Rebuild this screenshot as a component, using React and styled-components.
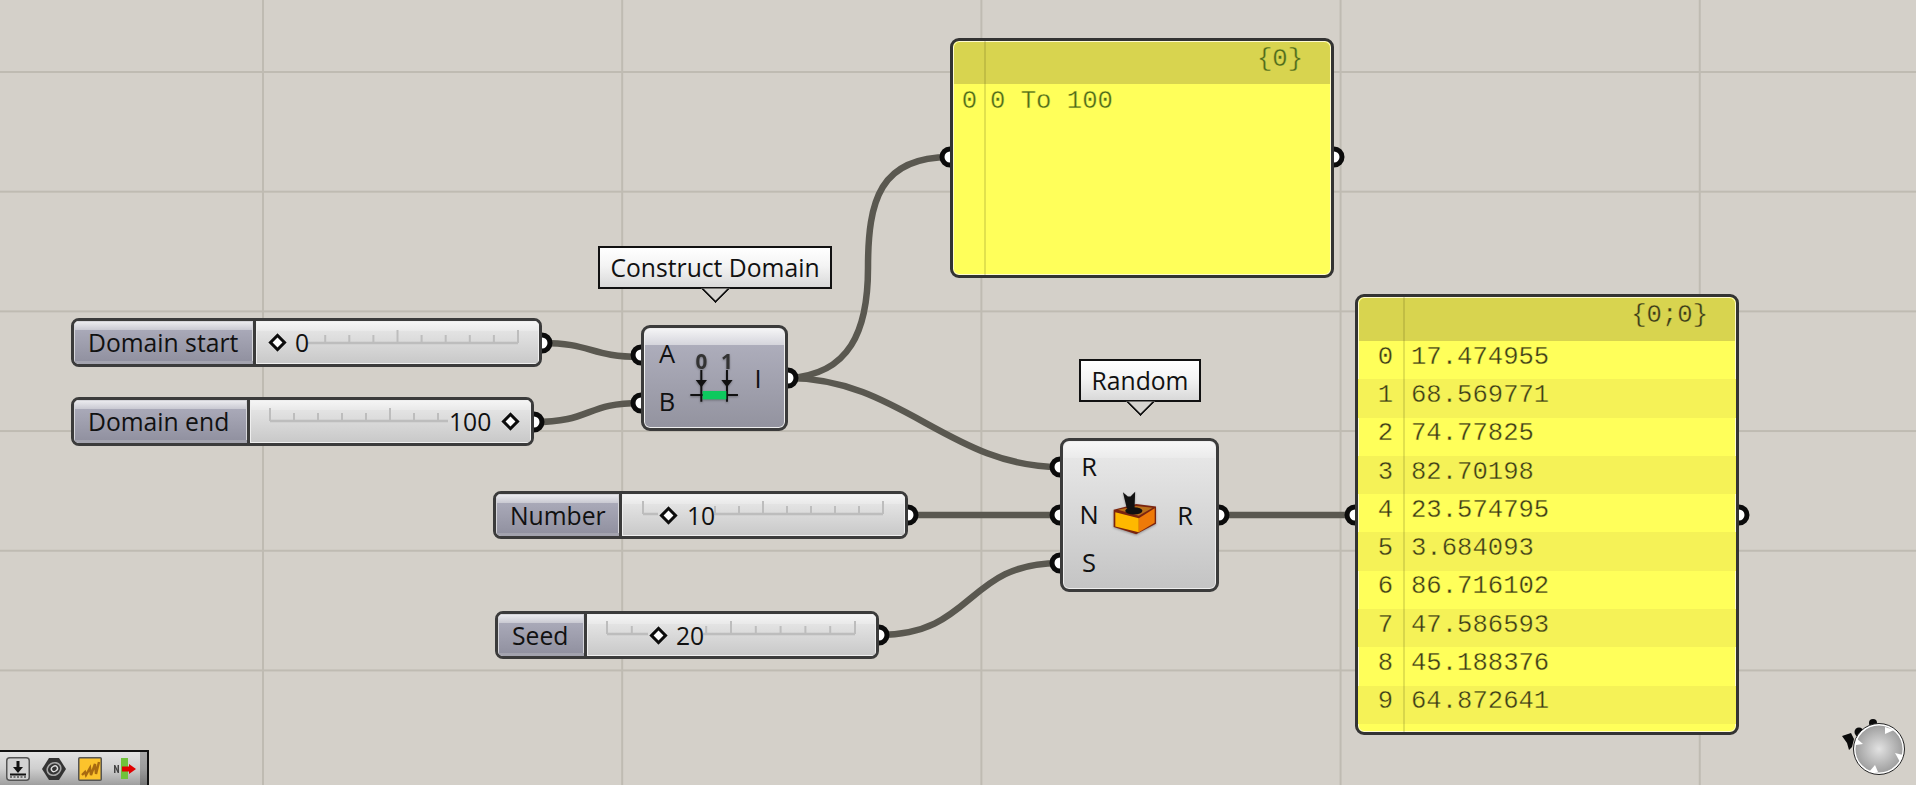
import React from "react";
import styled, { createGlobalStyle, css } from "styled-components";

const Global = createGlobalStyle`
  html, body { margin: 0; height: 100%; overflow: hidden; background: #d4d0c9; }
`;

const UI = `"Open Sans", "Noto Sans", sans-serif`;
const MONO = `"Liberation Mono", monospace`;

const Canvas = styled.div`
  position: relative;
  width: 1916px;
  height: 785px;
  overflow: hidden;
  background-color: #d4d0c9;
  background-image:
    linear-gradient(90deg, #bfbbb2 2px, transparent 2px),
    linear-gradient(#bfbbb2 2px, transparent 2px);
  background-size: 359.2px 119.7px;
  background-position: 262px 71px;
  font-family: ${UI};
  color: #111;
`;

const WireLayer = styled.svg`
  position: absolute;
  inset: 0;
`;

const placed = css`
  position: absolute;
  left: ${(p) => p.$x}px;
  top: ${(p) => p.$y}px;
  width: ${(p) => p.$w}px;
  height: ${(p) => p.$h}px;
  box-sizing: border-box;
`;

const gloss = (band, a, b, c, d) =>
  `linear-gradient(${a} 0, ${b} ${band}px, ${c} ${band}px, ${d} 100%)`;

const SliderNode = styled.div`
  ${placed}
  display: flex;
  border: 3px solid #3b3b3b;
  border-radius: 8px;
  overflow: hidden;
  font-size: 24.7px;
`;

const SliderName = styled.div`
  width: ${(p) => p.$w}px;
  flex: none;
  box-sizing: border-box;
  display: flex;
  align-items: center;
  padding-left: 14px;
  border-right: 3px solid #3b3b3b;
  background: ${gloss(9, "#eeeef1", "#c9c9d2", "#a9a9b8", "#8f8f9e")};
  box-shadow: inset 0 -3px 0 #a3a3ae, inset 0 0 0 1px #d5d5da;
`;

const SliderBody = styled.div`
  position: relative;
  flex: 1;
  background: ${gloss(10, "#f6f6f6", "#e9e9e9", "#e3e3e3", "#c8c8c8")};
  box-shadow: inset 0 0 0 1px #efefef;
`;

const RailSvg = styled.svg`
  position: absolute;
  inset: 0;
  width: 100%;
  height: 100%;
`;

const Grip = styled.span`
  position: absolute;
  left: ${(p) => p.$x - 6.5}px;
  top: 14.5px;
  width: 7px;
  height: 7px;
  border: 3px solid #0c0c0c;
  background: #fff;
  transform: rotate(45deg);
`;

const SliderValue = styled.span`
  position: absolute;
  left: ${(p) => p.$x}px;
  top: 0;
  height: 100%;
  display: flex;
  align-items: center;
`;

const ComponentNode = styled.div`
  ${placed}
  display: flex;
  justify-content: space-between;
  padding-top: 2px;
  border: 3px solid #3b3b3b;
  border-radius: 9px;
  font-size: 25.5px;
  background: ${(p) =>
    p.$tone === "selected"
      ? gloss(17, "#f6f6f7", "#d5d5dc", "#adadbb", "#93939f")
      : gloss(17, "#f7f7f7", "#ebebeb", "#e6e6e6", "#c4c4c4")};
  box-shadow: inset 0 0 0 1px #eeeeee;
`;

const PortColumn = styled.div`
  width: ${(p) => p.$w}px;
  flex: none;
  box-sizing: border-box;
  padding-right: ${(p) => p.$pad || 0}px;
  display: flex;
  flex-direction: column;
  justify-content: ${(p) => (p.$center ? "center" : "flex-start")};
`;

const PortLabel = styled.div`
  height: 48px;
  display: flex;
  align-items: center;
  justify-content: center;
  line-height: 1;
`;

const IconSlot = styled.div`
  flex: 1;
  min-width: 0;
  display: flex;
  align-items: center;
  justify-content: center;
  margin-bottom: 7px;
  & > svg {
    flex: none;
    filter: drop-shadow(0 1px 1px rgba(0, 0, 0, 0.3));
  }
`;

const Tooltip = styled.div`
  ${placed}
  display: flex;
  align-items: center;
  justify-content: center;
  padding-bottom: 1px;
  border: 2.5px solid #111;
  background: linear-gradient(#ffffff, #f4f4f4 45%, #d9d9d9);
  font-size: 24.7px;
  white-space: nowrap;
  &::after {
    content: "";
    position: absolute;
    left: 50%;
    bottom: -12px;
    width: 21px;
    height: 21px;
    margin-left: -10.5px;
    box-sizing: border-box;
    background: #d6d4d0;
    border-right: 2.5px solid #111;
    border-bottom: 2.5px solid #111;
    transform: rotate(45deg);
    clip-path: polygon(100% 0, 100% 100%, 0 100%);
  }
`;

const Panel = styled.div`
  ${placed}
  display: flex;
  flex-direction: column;
  border: 3px solid #333;
  border-radius: 9px;
  overflow: hidden;
  background: #ffff5a;
  box-shadow: inset 0 0 0 1px #fffbd0;
  font-family: ${MONO};
  font-size: 25.6px;
  font-weight: 400;
  color: ${(p) => p.$ink};
  -webkit-text-stroke: 0.35px #fbf955;
  &::before {
    content: "";
    position: absolute;
    left: ${(p) => p.$rule}px;
    top: 0;
    bottom: 0;
    width: 2px;
    background: rgba(90, 90, 20, 0.18);
  }
`;

const PanelHead = styled.div`
  height: ${(p) => p.$h}px;
  flex: none;
  box-sizing: border-box;
  display: flex;
  align-items: center;
  justify-content: flex-end;
  padding: 0 27px ${(p) => p.$lift}px 0;
  margin: 1px 1px 0;
  border-radius: 6px 6px 0 0;
  background: #d8d44f;
  -webkit-text-stroke: 0.35px #d8d44f;
`;

const PanelRow = styled.div`
  height: ${(p) => p.$h}px;
  flex: none;
  box-sizing: border-box;
  padding-bottom: ${(p) => p.$lift}px;
  display: grid;
  grid-template-columns: ${(p) => p.$idx}px 1fr;
  column-gap: ${(p) => p.$gap}px;
  align-items: center;
  background: ${(p) => (p.$alt ? "#f5f257" : "transparent")};
`;

const RowIndex = styled.span`
  text-align: right;
`;

const ToolBar = styled.div`
  position: absolute;
  left: 0;
  bottom: 0;
  width: 149px;
  height: 35px;
  box-sizing: border-box;
  display: flex;
  align-items: center;
  gap: 12px;
  padding-left: 6px;
  border-top: 2px solid #111;
  border-right: 2px solid #111;
  background:
    linear-gradient(90deg, transparent 140px, rgba(0, 0, 0, 0.25) 140px),
    linear-gradient(#e2e2e2, #cfcfcf 50%, #9f9f9f);
`;

const Compass = styled.svg`
  position: absolute;
  right: 0;
  bottom: 0;
`;

function Rail({ w, h, x0, x1, y, gaps }) {
  const step = (x1 - x0) / 10;
  const ticks = Array.from({ length: 11 }, (_, i) => ({ i, x: x0 + step * i }));
  const inGap = (x) => gaps.some(([a, b]) => x > a - 1 && x < b + 1);
  const pts = [x0, ...gaps.flat(), x1];
  const segs = [];
  for (let i = 0; i < pts.length; i += 2) segs.push([pts[i], pts[i + 1]]);
  return (
    <RailSvg viewBox={`0 0 ${w} ${h}`}>
      {segs.map(([a, b]) => (
        <line key={a} x1={a} x2={b} y1={y} y2={y} stroke="#bdbdbd" strokeWidth="2.5" />
      ))}
      {ticks.filter((t) => !inGap(t.x)).map((t) => (
        <line
          key={t.i}
          x1={t.x}
          x2={t.x}
          y1={y}
          y2={y - (t.i % 5 === 0 ? 13 : 8)}
          stroke="#bdbdbd"
          strokeWidth="2"
        />
      ))}
    </RailSvg>
  );
}

const sliders = [
  { name: "Domain start", x: 71, y: 318, w: 471, h: 49, nameW: 182, rail: [277, 518], ry: 343, gaps: [[270, 308]], grip: 277, text: "0", tx: 295 },
  { name: "Domain end", x: 71, y: 397, w: 463, h: 49, nameW: 176, rail: [270, 510], ry: 421, gaps: [[448, 518]], grip: 510, text: "100", tx: 449 },
  { name: "Number", x: 493, y: 491, w: 415, h: 48, nameW: 126, rail: [643, 883], ry: 514, gaps: [[658, 714]], grip: 668, text: "10", tx: 687 },
  { name: "Seed", x: 495, y: 611, w: 384, h: 48, nameW: 89, rail: [607, 855], ry: 634, gaps: [[648, 703]], grip: 658, text: "20", tx: 676 },
];

const wires = [
  "M542 343 C 592 343, 590 357, 641 357",
  "M534 422 C 592 422, 585 403, 641 403",
  "M788 378 C 850 375, 868 330, 868 268 C 868 200, 880 157, 950 157",
  "M788 378 C 900 378, 950 467, 1060 467",
  "M908 515 L 1060 515",
  "M879 635 C 975 635, 965 563, 1060 563",
  "M1219 515 L 1355 515",
];

const ports = [
  [542, 343], [534, 422], [908, 515], [879, 635],
  [641, 355], [641, 403], [788, 378],
  [1060, 467], [1060, 515], [1060, 563], [1219, 515],
  [950, 157], [1334, 157], [1355, 515], [1739, 515],
];

const randomRows = [
  "17.474955", "68.569771", "74.77825", "82.70198", "23.574795",
  "3.684093", "86.716102", "47.586593", "45.188376", "64.872641",
];

function DomainIcon() {
  return (
    <svg width="53.3" height="55" viewBox="265 144 160 165">
      <g fontFamily={UI} fontWeight="700" fontSize="62" fill="#333" textAnchor="middle">
        <text x="305" y="208">0</text>
        <text x="382" y="208">1</text>
      </g>
      <g stroke="#111" strokeWidth="6" fill="none">
        <path d="M305 210v35M382 210v35" />
        <path d="M272 285h143" />
        <path d="M305 255v50M382 255v50" />
      </g>
      <path d="M288 240h34l-17 22zM365 240h34l-17 22z" fill="#111" />
      <rect x="309" y="273" width="71" height="25" fill="#0dc95e" />
    </svg>
  );
}

function RandomIcon() {
  return (
    <svg width="48" height="48" viewBox="214 415 145 145">
      <path d="M222 478 L290 460 L350 468 L350 520 L290 552 L222 530Z" fill="#7a2410" />
      <path d="M227 485 L298 503 L298 546 L227 528Z" fill="#ffb800" />
      <path d="M298 503 L346 473 L346 517 L298 546Z" fill="#ee7a08" />
      <path d="M235 478 L290 466 L340 472 L298 496Z" fill="#b9701a" />
      <ellipse cx="283" cy="481" rx="26" ry="11" fill="#111" />
      <path d="M250 425 L265 438 L273 438 L287 423 L285 475 L262 475Z" fill="#111" />
    </svg>
  );
}

function ToolIcons() {
  return (
    <>
      <svg width="24" height="24" viewBox="0 0 24 24">
        <rect x=".75" y=".75" width="22.5" height="22.5" rx="3" fill="#d2d2d2" stroke="#555" strokeWidth="1.5" />
        <path d="M12 4v8" stroke="#111" strokeWidth="3" />
        <path d="M7 10h10l-5 6z" fill="#111" />
        <path d="M4 17.5h16" stroke="#111" strokeWidth="2" />
        <path d="M4 20h16" stroke="#555" strokeWidth="1.5" strokeDasharray="2 1.5" />
      </svg>
      <svg width="24" height="24" viewBox="0 0 24 24">
        <path d="M7 1h10l7 11-7 11H7L0 12z" fill="#333" />
        <ellipse cx="12" cy="12" rx="7" ry="6" fill="none" stroke="#a5a5a5" strokeWidth="1.6" transform="rotate(-30 12 12)" />
        <ellipse cx="12.5" cy="12" rx="3.2" ry="2.6" fill="none" stroke="#dedede" strokeWidth="1.4" transform="rotate(-30 12 12)" />
      </svg>
      <svg width="24" height="24" viewBox="0 0 24 24">
        <rect x=".75" y=".75" width="22.5" height="22.5" rx="1" fill="#fcc32c" stroke="#555" strokeWidth="1.5" />
        <path d="M4 18l3-3 1 3 4-7 1 7 4-11 1 10 3-12" fill="none" stroke="#a86a10" strokeWidth="2.4" />
      </svg>
      <svg width="22" height="24" viewBox="0 0 22 24">
        <rect x="7" y="1" width="7" height="21" fill="#6fc23a" />
        <path d="M0 8h1.5v8H0zM3.5 8H5v8H3.5z" fill="#444" />
        <path d="M1 9l3 6" stroke="#444" strokeWidth="1.4" />
        <rect x="8" y="9.5" width="7" height="5" fill="#e00000" />
        <path d="M15 7l7 5-7 5z" fill="#e00000" />
      </svg>
    </>
  );
}

export default function App() {
  return (
    <Canvas>
      <Global />
      <WireLayer width="1916" height="785" viewBox="0 0 1916 785">
        {wires.map((d) => (
          <path key={d} d={d} fill="none" stroke="#5a5850" strokeWidth="6.5" />
        ))}
        {ports.map(([cx, cy]) => (
          <circle key={`${cx}-${cy}`} cx={cx} cy={cy} r="8" fill="#fff" stroke="#0b0b0b" strokeWidth="5" />
        ))}
      </WireLayer>

      {sliders.map((s) => {
        const bodyX = s.x + s.nameW + 3;
        const bodyW = s.w - s.nameW - 6;
        return (
          <SliderNode key={s.name} $x={s.x} $y={s.y} $w={s.w} $h={s.h}>
            <SliderName $w={s.nameW}>{s.name}</SliderName>
            <SliderBody>
              <Rail
                w={bodyW}
                h={s.h - 6}
                x0={s.rail[0] - bodyX}
                x1={s.rail[1] - bodyX}
                y={s.ry - s.y - 3}
                gaps={s.gaps.map(([a, b]) => [a - bodyX, b - bodyX])}
              />
              <Grip $x={s.grip - bodyX} />
              <SliderValue $x={s.tx - bodyX}>{s.text}</SliderValue>
            </SliderBody>
          </SliderNode>
        );
      })}

      <Tooltip $x={598} $y={246} $w={234} $h={43}>Construct Domain</Tooltip>
      <ComponentNode $x={641} $y={325} $w={147} $h={106} $tone="selected">
        <PortColumn $w={54} $pad={8}>
          <PortLabel>A</PortLabel>
          <PortLabel>B</PortLabel>
        </PortColumn>
        <IconSlot><DomainIcon /></IconSlot>
        <PortColumn $w={54} $center>
          <PortLabel>I</PortLabel>
        </PortColumn>
      </ComponentNode>

      <Tooltip $x={1079} $y={359} $w={122} $h={43}>Random</Tooltip>
      <ComponentNode $x={1060} $y={438} $w={159} $h={154}>
        <PortColumn $w={52}>
          <PortLabel>R</PortLabel>
          <PortLabel>N</PortLabel>
          <PortLabel>S</PortLabel>
        </PortColumn>
        <IconSlot><RandomIcon /></IconSlot>
        <PortColumn $w={62} $center>
          <PortLabel>R</PortLabel>
        </PortColumn>
      </ComponentNode>

      <Panel $x={950} $y={38} $w={384} $h={240} $ink="#4c6a1c" $rule={31}>
        <PanelHead $h={42} $lift={8}>{"{0}"}</PanelHead>
        <PanelRow $h={37} $idx={24} $gap={13} $lift={3}>
          <RowIndex>0</RowIndex>
          <span>0 To 100</span>
        </PanelRow>
      </Panel>

      <Panel $x={1355} $y={294} $w={384} $h={441} $ink="#3c3c1a" $rule={45}>
        <PanelHead $h={43} $lift={9}>{"{0;0}"}</PanelHead>
        {randomRows.map((v, i) => (
          <PanelRow key={v} $h={38.3} $idx={35} $gap={18} $alt={i % 2 === 1} $lift={6}>
            <RowIndex>{i}</RowIndex>
            <span>{v}</span>
          </PanelRow>
        ))}
      </Panel>

      <ToolBar><ToolIcons /></ToolBar>

      <Compass width="96" height="80" viewBox="0 0 96 80">
        <defs>
          <radialGradient id="dial" cx="50%" cy="50%" r="50%">
            <stop offset="0" stopColor="#e2e2e2" />
            <stop offset="1" stopColor="#9d9d9d" />
          </radialGradient>
        </defs>
        <g fill="#0b0b0b">
          <circle cx="53" cy="18" r="4" />
          <circle cx="39" cy="27" r="4.5" />
          <path d="M22 31l9-3 3 6-2 8-3 3-2-7z" />
        </g>
        <circle cx="59" cy="44" r="24.5" fill="url(#dial)" stroke="#fff" strokeWidth="2" />
        <circle cx="59" cy="44" r="25.5" fill="none" stroke="#222" strokeWidth="1" />
        <g fill="#fff">
          <path d="M65 22l9 3-9 4z" />
          <path d="M75 48l8 2-3 7z" />
          <path d="M49 67l6-7 3 7z" />
          <path d="M36 33l7 6-7 1z" />
        </g>
      </Compass>
    </Canvas>
  );
}
